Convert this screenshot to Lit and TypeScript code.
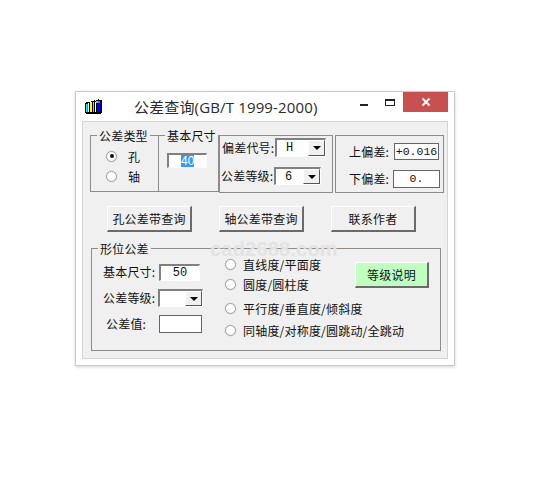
import { LitElement, html, css, svg } from "lit";
import { customElement } from "lit/decorators.js";

@customElement("app-root")
export class AppRoot extends LitElement {
  static styles = css`
    :host { display: block; width: 546px; height: 498px; background: #fff; overflow: hidden;
      font-family: "Noto Sans CJK SC", "Liberation Sans", sans-serif; font-size: 12px; color: #111; letter-spacing: .2px; }
    * { box-sizing: border-box; }
    .window { position: relative; margin: 91px 0 0 75px; width: 380px; height: 275px; background: #fff;
      border: 1px solid #c9c9c9; box-shadow: 0 1px 3px rgba(0,0,0,.18); padding: 0 6px 6px 6px; display: flex; flex-direction: column; }
    .titlebar { height: 29px; display: flex; align-items: flex-start; flex: none; }
    .icon { width: 18px; height: 15px; margin: 7px 0 0 3px; flex: none; }
    .title { margin: 5px 0 0 31px; font: 15px/20px "Open Sans", "Noto Sans CJK SC", sans-serif; color: #2a2a2a; white-space: nowrap; width: 206px; flex: none; letter-spacing: .15px; }
    .winbtns { display: flex; margin-left: auto; }
    .wb { width: 26px; height: 20px; display: flex; align-items: center; justify-content: center; }
    .close { width: 45px; background: #c75050; }
    .client { flex: 1; background: #f0f0f0; border: 1px solid #d4d4d4; padding: 7px 0 0 7px; display: flex; flex-direction: column; position: relative; }
    .top { display: flex; height: 64px; flex: none; }
    fieldset { margin: 0; padding: 0; border: 1px solid #8c8c8c; min-width: 0; }
    legend { padding: 0 2px; margin-left: 6px; font-size: 12px; line-height: 13px; white-space: nowrap; }
    .g1 { width: 69px; height: 63px; }
    .g1in { margin: 4px 0 0 15px; }
    .g2 { width: 61px; height: 63px; margin-left: -1px; }
    .g2in { margin: 11px 0 0 8px; }
    .radio-row { display: flex; align-items: center; height: 20px; }
    .rtext { margin-left: 11px; }
    .radio { width: 11px; height: 11px; border-radius: 50%; background: #fff; border: 1px solid #9a9a9a; box-shadow: 0 0 0 1px #e8e8e8; display: flex; align-items: center; justify-content: center; flex: none; }
    .dot { width: 4px; height: 4px; background: #111; border-radius: 50%; }
    .input40 { width: 40px; height: 15px; background: #fff; border-style: solid; border-width: 2px 1px 1px 2px; border-color: #808080 #fff #fff #808080; display: flex; justify-content: center; }
    .sel { background: #3399ff; color: #fff; font: 12px/12px "Liberation Sans", sans-serif; width: 13px; text-align: center; letter-spacing: 0; }
    .box { border: 1px solid #8c8c8c; height: 58px; margin-top: 6px; }
    .b3 { width: 114px; padding: 2px 0 0 2px; }
    .b4 { width: 109px; margin-left: 2px; padding: 7px 0 0 13px; }
    .frow { display: flex; align-items: center; }
    .b3 .frow { height: 19px; }
    .b3 .frow + .frow { height: 18px; margin-top: 10px; }
    .b3 .lbl { width: 53px; }
    .b3 .frow + .frow .lbl { width: 53px; margin-left: -1px; }
    .lbl { white-space: nowrap; line-height: 14px; flex: none; }
    .combo { height: 19px; background: #fff; border-style: solid; border-width: 2px 1px 1px 2px; border-color: #808080 #fff #fff #808080; display: flex; justify-content: space-between; font: 12px/16px "Liberation Mono", monospace; padding: 0 0 0 9px; flex: none; letter-spacing: 0; }
    .arrowbtn { width: 17px; background: #f0f0f0; border-style: solid; border-width: 1px; border-color: #fff #555 #555 #fff; display: flex; align-items: center; justify-content: center; flex: none; }
    .arrow { width: 0; height: 0; border-style: solid; border-width: 4px 4px 0 4px; border-color: #000 transparent transparent transparent; }
    .flat { background: #fff; border: 1px solid #666; display: flex; align-items: center; justify-content: center; font: 11.5px/14px "Liberation Mono", monospace; flex: none; letter-spacing: 0; }
    .b4 .lbl { width: 44px; }
    .b4 .frow { height: 17px; }
    .b4 .frow + .frow { height: 18px; margin-top: 10px; }
    .up { width: 45px; height: 17px; margin-left: 1px; }
    .down { width: 47px; height: 18px; }
    .btns { display: flex; margin: 13px 0 0 17px; height: 26px; flex: none; }
    .btn { width: 85px; height: 26px; background: #f0f0f0; border-style: solid; border-width: 1px 2px 2px 1px; border-color: #fff #6b6b6b #6b6b6b #fff; display: flex; align-items: center; justify-content: center; flex: none; }
    .btns .btn + .btn { margin-left: 27px; }
    .g3 { margin: 10px 0 0 1px; width: 350px; height: 109px; flex: none; }
    .g3in { display: flex; padding-left: 11px; position: relative; z-index: 1; }
    .c1 { width: 122px; flex: none; padding-top: 8px; }
    .c1 .frow { height: 18px; }
    .c1 .frow:nth-child(2) { margin-top: 8px; }
    .c1 .frow:nth-child(3) { margin-top: 8px; }
    .c1 .lbl { width: 55px; }
    .c1 .frow:nth-child(3) .lbl { width: 53px; margin-left: 3px; }
    .ig { width: 41px; height: 17px; background: #fff; border-style: solid; border-width: 2px 1px 1px 2px; border-color: #808080 #fff #fff #808080; font: 12px/14px "Liberation Mono", monospace; text-align: center; margin-left: 1px; letter-spacing: 0; }
    .val { width: 43px; height: 18px; }
    .c2 { flex: none; width: 130px; }
    .c2 .radio-row { height: 18px; }
    .c2 .rtext { margin-left: 7px; white-space: nowrap; }
    .c2 .radio-row:nth-child(2) { margin-top: 2px; }
    .c2 .radio-row:nth-child(3) { margin-top: 6px; }
    .c2 .radio-row:nth-child(4) { margin-top: 4px; }
    .green { background: #c0ffc0; width: 74px; height: 26px; margin-top: 7px; flex: none; }
    .wm { position: absolute; left: 134px; top: 147px; font: bold 20px/20px "Liberation Sans", sans-serif; color: #e3e3e3; letter-spacing: .2px; pointer-events: none; }
  `;

  private radio(on = false) {
    return html`<span class="radio">${on ? html`<span class="dot"></span>` : ""}</span>`;
  }

  private combo(v: string, w: number, h: number) {
    return html`<div class="combo" style="width:${w}px;height:${h}px">
      <span>${v}</span><span class="arrowbtn"><span class="arrow"></span></span></div>`;
  }

  render() {
    return html`
      <div class="window">
        <div class="titlebar">
          <svg class="icon" viewBox="0 0 18 15" shape-rendering="crispEdges">
            ${svg`<path fill="#000" d="M0 4h1V3h5V2h3V1h1v1h1V1h2V0h1v1h3v13h-1v1H1v-1H0z"/>
            <path fill="#0ff" d="M1 5h1v8H1z"/><path fill="#0a8" d="M2 5h1v8H2z"/><path fill="#fff" d="M3 4h1v9H3z"/>
            <path fill="#ff0" d="M5 3h2v10H5z"/><path fill="#0ff" d="M8 3h1v10H8z"/><path fill="#fff" d="M10 3h1v10h-1z"/>
            <path fill="#aaa" d="M11 2h2v2h-2z"/>
            <path fill="#00f" d="M12 4h3v9h-3z"/><path fill="#66f" d="M13 2h2v2h-2z"/><path fill="#008" d="M15 2h1v11h-1z"/>`}
          </svg>
          <div class="title">公差查询(GB/T 1999-2000)</div>
          <div class="winbtns">
            <div class="wb"><svg width="10" height="14" viewBox="0 0 10 14">${svg`<rect x="1" y="9" width="8" height="2" fill="#222"/>`}</svg></div>
            <div class="wb"><svg width="12" height="12" viewBox="0 0 12 12">${svg`<rect x="1.5" y="3.5" width="9" height="6" fill="none" stroke="#222"/><rect x="1" y="3" width="10" height="2" fill="#222"/>`}</svg></div>
            <div class="wb close"><svg width="10" height="10" viewBox="0 0 10 10">${svg`<path d="M1.5 1.5l7 7M8.5 1.5l-7 7" stroke="#fff" stroke-width="1.8"/>`}</svg></div>
          </div>
        </div>
        <div class="client">
          <div class="top">
            <fieldset class="g1">
              <legend>公差类型</legend>
              <div class="g1in">
                <div class="radio-row">${this.radio(true)}<span class="rtext">孔</span></div>
                <div class="radio-row">${this.radio()}<span class="rtext">轴</span></div>
              </div>
            </fieldset>
            <fieldset class="g2">
              <legend>基本尺寸</legend>
              <div class="g2in"><div class="input40"><span class="sel">40</span></div></div>
            </fieldset>
            <div class="box b3">
              <div class="frow"><span class="lbl">偏差代号:</span>${this.combo("H", 51, 19)}</div>
              <div class="frow"><span class="lbl">公差等级:</span>${this.combo("6", 47, 18)}</div>
            </div>
            <div class="box b4">
              <div class="frow"><span class="lbl">上偏差:</span><span class="flat up">+0.016</span></div>
              <div class="frow"><span class="lbl">下偏差:</span><span class="flat down">0.</span></div>
            </div>
          </div>
          <div class="btns">
            <div class="btn">孔公差带查询</div>
            <div class="btn">轴公差带查询</div>
            <div class="btn">联系作者</div>
          </div>
          <fieldset class="g3">
            <legend>形位公差</legend>
            <div class="g3in">
              <div class="c1">
                <div class="frow"><span class="lbl">基本尺寸:</span><div class="ig">50</div></div>
                <div class="frow"><span class="lbl">公差等级:</span>${this.combo("", 45, 18)}</div>
                <div class="frow"><span class="lbl">公差值:</span><span class="flat val"></span></div>
              </div>
              <div class="c2">
                <div class="radio-row">${this.radio()}<span class="rtext">直线度/平面度</span></div>
                <div class="radio-row">${this.radio()}<span class="rtext">圆度/圆柱度</span></div>
                <div class="radio-row">${this.radio()}<span class="rtext">平行度/垂直度/倾斜度</span></div>
                <div class="radio-row">${this.radio()}<span class="rtext">同轴度/对称度/圆跳动/全跳动</span></div>
              </div>
              <div class="btn green">等级说明</div>
            </div>
          </fieldset>
        </div>
        <div class="wm">cad2688.com</div>
      </div>
    `;
  }
}
